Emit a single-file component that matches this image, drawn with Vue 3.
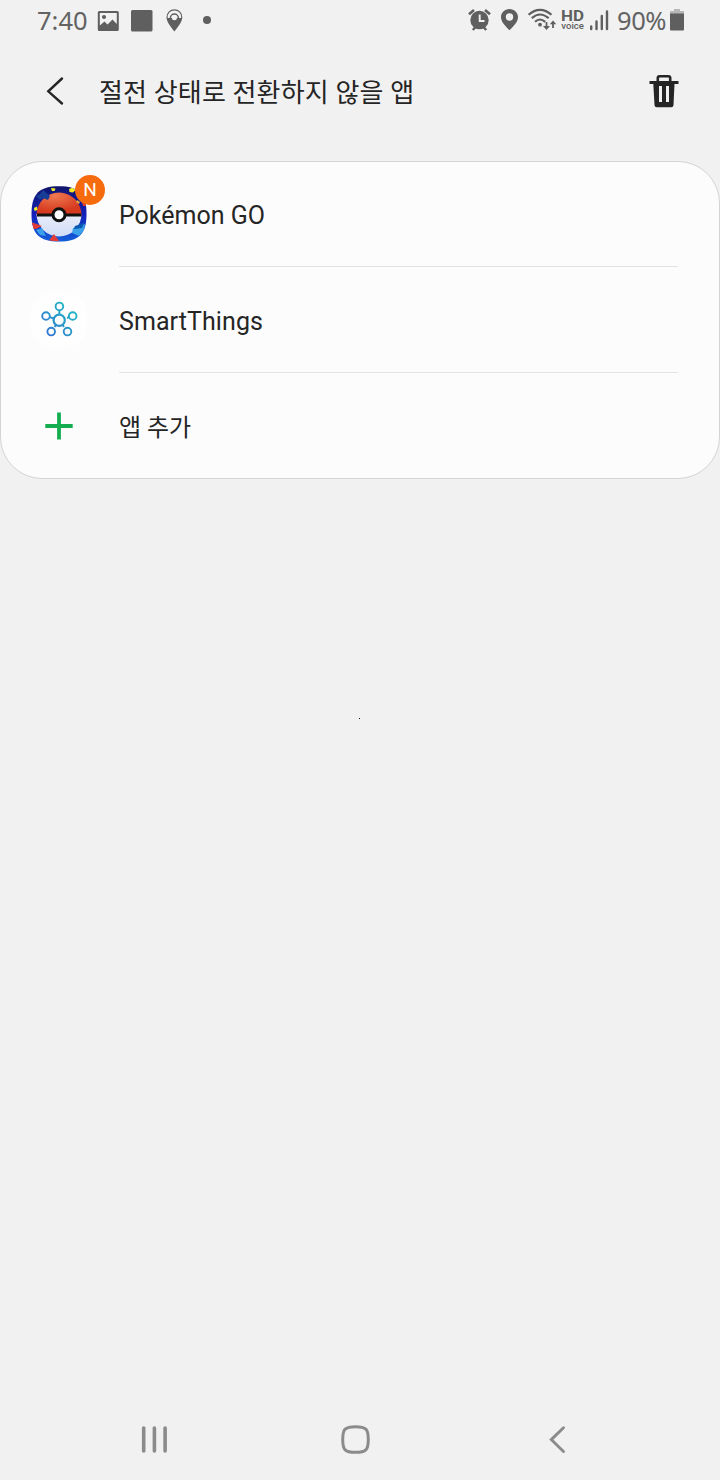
<script setup>
const apps = [
  { id: 'pokemon', name: 'Pokémon GO', badge: 'N' },
  { id: 'smartthings', name: 'SmartThings' },
  { id: 'add', name: '앱 추가' },
]
</script>

<template>
  <div class="screen">
    <div class="status">
      <div class="status-left">
        <span class="time">7:40</span>
        <svg class="picture" width="22" height="42" viewBox="97 0 22 42">
          <path fill="#5f5f5f" fill-rule="evenodd" d="M99.300 11H117.300Q118.800 11 118.800 12.500V29.500Q118.800 31 117.300 31H99.300Q97.800 31 97.800 29.500V12.500Q97.800 11 99.300 11ZM99.800 13V25.500L104.500 21.500L107.500 24.500L112.500 19.500L116.800 24V13Z" />
          <circle cx="104" cy="17" r="2.100" fill="#5f5f5f" />
        </svg>
        <svg class="square" width="22" height="42" viewBox="131 0 22 42">
          <rect x="131" y="10" width="21.500" height="21.500" rx="1.500" fill="#5f5f5f" />
        </svg>
        <svg class="stop" width="18" height="42" viewBox="165 0 18 42">
          <path d="M166.600 18H182.200C181.900 22.500 178 26.500 174.400 31.500C170.800 26.500 166.900 22.500 166.600 18Z" fill="#5f5f5f" />
          <path d="M167 18C166.500 7.200 182.300 7.200 181.800 18" fill="none" stroke="#5f5f5f" stroke-width="1.200" />
          <path d="M170.400 18A4 4 0 0 1 178.400 18" fill="none" stroke="#5f5f5f" stroke-width="1.500" />
          <circle cx="174.400" cy="17.700" r="2.500" fill="#f1f1f1" />
        </svg>
        <i class="dot"></i>
      </div>
      <div class="status-right">
        <svg width="24" height="42" viewBox="467 0 24 42">
          <path d="M469 14.300L474 10M485 10L490 14.300" stroke="#5f5f5f" stroke-width="2.600" fill="none" />
          <path d="M472.800 30L475.500 27M486.200 30L483.500 27" stroke="#5f5f5f" stroke-width="2.500" />
          <circle cx="479.500" cy="20" r="9.200" fill="#5f5f5f" />
          <path d="M479.700 14.500V21H484.500" fill="none" stroke="#f1f1f1" stroke-width="1.900" />
        </svg>
        <svg class="location" width="18" height="42" viewBox="501 0 18 42">
          <path fill="#5f5f5f" fill-rule="evenodd" d="M509.500 9C504.500 9 501 12.700 501 17.200C501 21.500 504.500 25 509.500 30.300C514.500 25 518 21.500 518 17.200C518 12.700 514.500 9 509.500 9ZM509.500 13.300A3.700 3.700 0 1 1 509.500 20.700A3.700 3.700 0 1 1 509.500 13.300Z" />
        </svg>
        <svg class="wifi" width="30" height="42" viewBox="527 0 30 42">
          <g fill="none" stroke="#5f5f5f" stroke-width="2.200">
            <path d="M528.600 14.800Q534 9.800 540 9.800T551.500 14.800" />
            <path d="M531.800 18.200Q536 14.500 540 14.500T548.700 18.200" />
            <path d="M535 21.800Q537.500 19.500 540 19.500T545.200 21.800" />
            <path d="M546.500 22V28M553 28V22" stroke-width="1.800" />
          </g>
          <circle cx="540" cy="24.700" r="1.900" fill="#5f5f5f" />
          <path d="M543 26H550L546.500 30ZM549.800 24.300L553 20.500L556.300 24.300Z" fill="#5f5f5f" />
        </svg>
        <svg class="hd" width="25" height="42" viewBox="560 0 25 42">
          <text x="561" y="20.700" class="hd-main" textLength="23" lengthAdjust="spacingAndGlyphs">HD</text>
          <text x="561.300" y="28.500" class="hd-sub" textLength="22.700" lengthAdjust="spacingAndGlyphs">voice</text>
        </svg>
        <svg class="signal" width="20" height="42" viewBox="590 0 20 42">
          <path d="M591.200 26.500V29M596.500 21.500V29M601.800 16V29M607 11.500V29" stroke="#5f5f5f" stroke-width="2.400" stroke-linecap="round" />
        </svg>
        <span class="percent">90%</span>
        <svg class="battery" width="15" height="42" viewBox="670 0 15 42">
          <path d="M674 9H680V11H684V14H670V11H674Z" fill="#b7b7b7" />
          <path d="M670 13.500H684V29.500Q684 30.500 683 30.500H671Q670 30.500 670 29.500Z" fill="#5f5f5f" />
        </svg>
      </div>
    </div>

    <header class="header">
      <svg class="back" width="20" height="32" viewBox="45 75 20 32">
        <path d="M62 78.500L48.300 91.300L62 103.500" fill="none" stroke="#252525" stroke-width="2.400" stroke-linecap="round" />
      </svg>
      <h1>절전 상태로 전환하지 않을 앱</h1>
      <svg class="trash" width="30" height="36" viewBox="649 73 30 36">
        <path d="M657.800 82V78Q657.800 76.200 659.600 76.200H668.400Q670.200 76.200 670.200 78V82" fill="none" stroke="#252525" stroke-width="2.600" />
        <path d="M649.500 81H678.500V84H674.500L673.500 105Q673.400 107.300 671.200 107.300H656.800Q654.600 107.300 654.500 105L653.300 84H649.500Z" fill="#252525" />
        <path d="M660.500 86V102M667.500 86V102" stroke="#f1f1f1" stroke-width="3" />
      </svg>
    </header>

    <main class="card">
      <div v-for="app in apps" :key="app.id" class="row">
        <div class="icon">
          <svg v-if="app.id === 'pokemon'" width="58" height="58" viewBox="30 185 58 58">
            <defs>
              <clipPath id="squircle"><path d="M59 186.300C79 186.300 86.500 194 86.500 214S79 241.500 59 241.500S31.500 234 31.500 214S39 186.300 59 186.300Z" /></clipPath>
              <linearGradient id="night" x1="0" y1="0" x2="0" y2="1"><stop stop-color="#101468" /><stop offset=".5" stop-color="#1420b8" /><stop offset="1" stop-color="#1262dc" /></linearGradient>
              <radialGradient id="red" cx=".4" cy=".15" r=".7"><stop stop-color="#ed7950" /><stop offset="1" stop-color="#d63a1e" /></radialGradient>
              <linearGradient id="white" x1="0" y1="0" x2="0" y2="1"><stop stop-color="#e9edf9" /><stop offset="1" stop-color="#cfdcf6" /></linearGradient>
            </defs>
            <g clip-path="url(#squircle)">
              <rect x="30" y="185" width="58" height="58" fill="url(#night)" />
              <path d="M36.500 215A22.500 22.500 0 0 1 81.500 215Z" fill="url(#red)" />
              <path d="M36.500 214A22.500 22.500 0 0 0 81.500 214Z" fill="url(#white)" />
              <path d="M37 213.500H81.500V216.500H37Z" fill="#111" />
              <path d="M40 194L43 190L50 196L48 200L43 198L40 200L36 196Z" fill="#173d97" />
              <path d="M51 188L55.500 188.500L54.500 191L52 191ZM69 189L73 187.500L75.500 190L73 192.500L69.500 192ZM34 208L37 206.500L37.500 210L34.500 211Z" fill="#f4ed25" />
              <path d="M77 200L80 202L79 204L76 202Z" fill="#e8a53b" />
              <path d="M31 222L42 226L36 229H31ZM54 234L59.500 241.500L49 240.500ZM82 202H87V206H83Z" fill="#e33b36" />
              <path d="M73 228L85 224L84 230L79 236L72 233ZM36 230L42 228L46 236L40 235Z" fill="#3aa0ea" />
              <path d="M75 226L84 223L82 228L74 229Z" fill="#0758ae" />
            </g>
            <circle cx="59" cy="214.700" r="6" fill="#fff" stroke="#111" stroke-width="3" />
          </svg>
          <svg v-else-if="app.id === 'smartthings'" width="58" height="58" viewBox="30 291 58 58">
            <defs>
              <linearGradient id="hub" gradientUnits="userSpaceOnUse" x1="45" y1="334" x2="72" y2="308"><stop stop-color="#3470d3" /><stop offset=".5" stop-color="#2996cb" /><stop offset="1" stop-color="#20b8c4" /></linearGradient>
            </defs>
            <path d="M59 292C79 292 87 300 87 320S79 348 59 348S31 340 31 320S39 292 59 292Z" fill="#fefefe" />
            <g fill="none" stroke="url(#hub)" stroke-width="1.900">
              <circle cx="59.200" cy="320.200" r="5.600" stroke-width="2.200" />
              <circle cx="59.400" cy="306.400" r="3.800" />
              <circle cx="46" cy="316" r="3.800" />
              <circle cx="72.700" cy="316" r="3.800" />
              <circle cx="51.200" cy="331.600" r="3.800" />
              <circle cx="67.500" cy="331.600" r="3.800" />
              <path d="M59.300 310.200L59.400 314.600M49.600 317.200L53.900 318.500M69.100 317.200L67 318M54.600 327L56 324.900M64 327L62.600 324.900" />
            </g>
          </svg>
          <svg v-else width="58" height="58" viewBox="30 397 58 58">
            <path d="M45.300 426H72.700M59 412.400V439.600" stroke="#14ae50" stroke-width="3.800" />
          </svg>
          <span v-if="app.badge" class="badge">{{ app.badge }}</span>
        </div>
        <div class="label" :class="app.id"><span>{{ app.name }}</span></div>
      </div>
    </main>

    <div class="space"><i class="speck"></i></div>

    <nav class="nav">
      <svg width="28" height="32" viewBox="141 1424 28 32">
        <path d="M143.700 1428V1451M154.400 1428V1451M165.100 1428V1451" stroke="#8b8b8b" stroke-width="3.600" stroke-linecap="round" />
      </svg>
      <svg class="home" width="32" height="32" viewBox="340 1424 32 32">
        <path d="M355.500 1426.700C366 1426.700 368.300 1429 368.300 1439.500S366 1452.300 355.500 1452.300S342.700 1450 342.700 1439.500S345 1426.700 355.500 1426.700Z" fill="none" stroke="#8b8b8b" stroke-width="3" />
      </svg>
      <svg class="nav-back" width="18" height="32" viewBox="548 1424 18 32">
        <path d="M563.500 1427.700L551.300 1439.600L563.500 1451.500" fill="none" stroke="#8b8b8b" stroke-width="2.900" stroke-linecap="round" />
      </svg>
    </nav>
  </div>
</template>

<style>
body { background: #f1f1f1; }
</style>

<style scoped>
.screen { width: 720px; height: 1480px; background: #f1f1f1; display: flex; flex-direction: column; overflow: hidden; font-family: Roboto, "Noto Sans CJK KR", sans-serif; color: #252525; }
svg { display: block; flex: none; }
.status { height: 42px; display: flex; justify-content: space-between; color: #636363; font-family: "Noto Sans", sans-serif; font-size: 26px; line-height: 40px; }
.status-left, .status-right { display: flex; align-items: center; }
.status-left { padding-left: 37px; }
.time { width: 50px; height: 42px; white-space: nowrap; font-size: 25.500px; }
.picture { margin-left: 10px; }
.square { margin-left: 12px; }
.stop { margin-left: 12px; }
.dot { width: 8px; height: 8px; border-radius: 50%; background: #5f5f5f; margin: 0 0 2px 20px; }
.status-right { padding-right: 35px; }
.location { margin-left: 10px; }
.wifi { margin-left: 8px; }
.hd { margin-left: 3px; }
.signal { margin-left: 5px; }
.hd-main { font: 700 14px Roboto, sans-serif; fill: #5f5f5f; }
.hd-sub { font: 500 9.500px Roboto, sans-serif; fill: #5f5f5f; }
.percent { width: 49px; height: 42px; margin-left: 7px; white-space: nowrap; font-size: 25.500px; letter-spacing: -.4px; }
.battery { margin-left: 4px; }
.header { height: 98px; display: flex; align-items: center; padding: 0 41px 0 45px; }
h1 { flex: 1; margin: 3px 0 0 34px; font-size: 26px; line-height: 36px; font-weight: 400; letter-spacing: .15px; white-space: nowrap; }
.card { box-sizing: border-box; height: 318px; margin-top: 21px; border: 1px solid #d4d4d4; border-radius: 42px; background: #fcfcfc; }
.row { height: 106px; display: flex; padding: 0 41px 0 29px; }
.row:last-child { height: 104px; }
.icon { position: relative; width: 58px; height: 58px; margin-top: 23px; flex: none; }
.badge { position: absolute; left: 45px; top: -10px; width: 30px; height: 30px; border-radius: 50%; background: #f76b0f; color: #fff; font-size: 19px; line-height: 30px; text-align: center; }
.label { box-sizing: border-box; height: 105px; margin-left: 31px; flex: 1; border-bottom: 1px solid #e3e3e3; font-size: 25px; line-height: 107px; white-space: nowrap; }
.label.smartthings { letter-spacing: .08px; }
.label.add { border: 0; height: 104px; font-size: 24px; line-height: 109px; }
.space { flex: 1; }
.speck { display: block; width: 1px; height: 1px; margin: 239px 0 0 359px; background: #111; }
.nav { height: 80px; display: flex; align-items: center; padding-left: 141px; }
.home { margin-left: 171px; }
.nav-back { margin-left: 176px; }
</style>
